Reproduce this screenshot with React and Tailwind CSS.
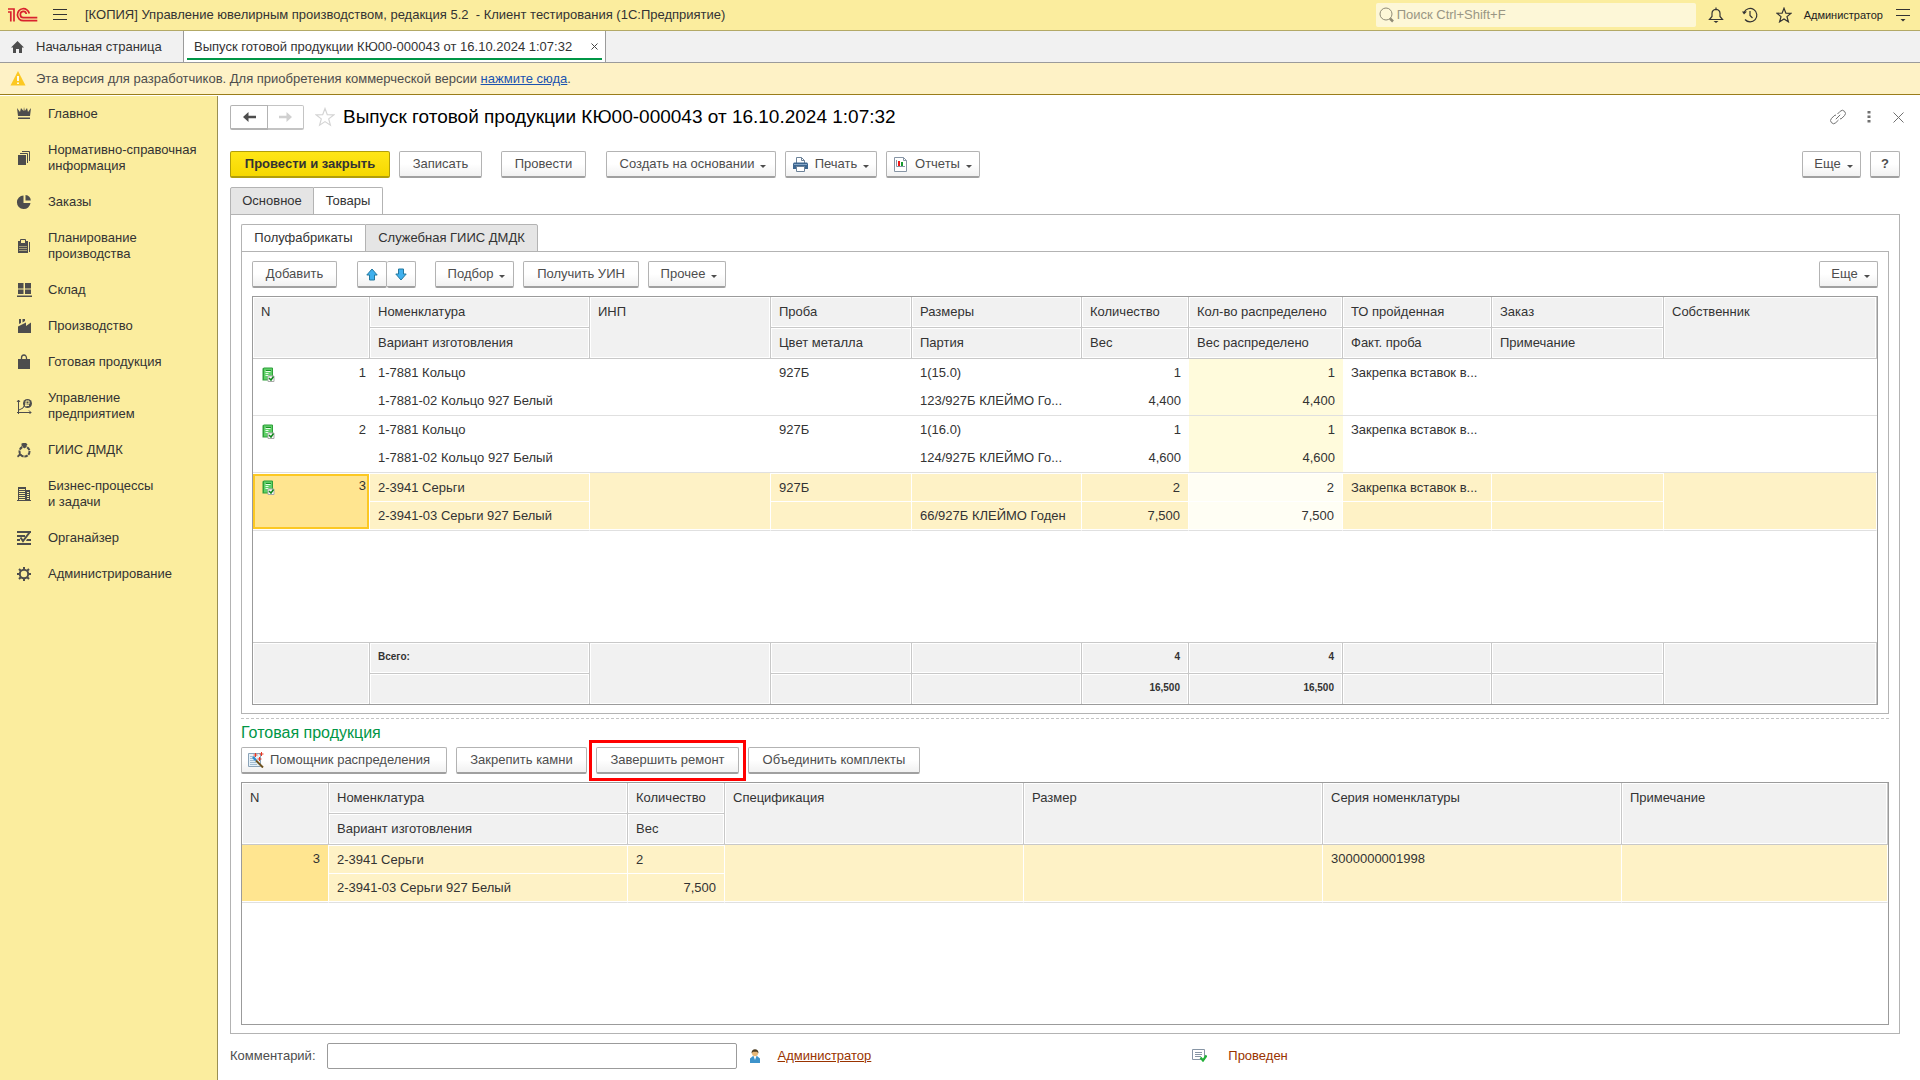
import { useState } from "react";

const btn =
  "flex h-[27px] items-center justify-center rounded-xs border border-[#b3b3b3] border-b-2 border-b-[#a0a0a0] bg-linear-to-b from-white from-50% to-[#f1f1f1] whitespace-nowrap text-[#4d4d4d]";

const headCell =
  "h-[31px] border-r border-b border-[#c8c8c8] bg-[#f1f1f1] px-2 text-left font-normal inset-shadow-[0_0_0_1px_#fff]";

function Caret() {
  return (
    <svg width="6" height="3" viewBox="0 0 6 3" className="mt-1 ml-[6px] shrink-0">
      <path d="M0 0h6L3 3z" fill="#4d4d4d" />
    </svg>
  );
}

function Logo() {
  return (
    <svg width="30" height="16" viewBox="0 0 30 16" fill="none" stroke="#d9232e" strokeWidth="1.7">
      <path d="M0 2h6v12.500M0 5h2.800v9.500" />
      <path d="M21.300 6.500a6 6 0 1 0-6 7.200h14" />
      <path d="M18.300 7a3 3.200 0 1 0-3 3.700h14" />
    </svg>
  );
}

function MenuIcon({ name }) {
  const icons = {
    crown: <path d="M1 2l3 4 1-4 2.500 3L8 1l.8 4L11 2l1 4 3-4-1 8H2zM2 11.500h12V13H2z" />,
    docs: (
      <>
        <path d="M2 5h8v10H2z" />
        <path d="M4 3.500h7.500V13M6 1.500h7.500V11" fill="none" stroke="#4d4d4d" />
      </>
    ),
    pie: (
      <>
        <path d="M7.500 1.500A6.800 6.800 0 1 0 14.500 9H7.500z" />
        <path d="M9.500 1a6 6 0 0 1 5.300 5.500H9.500z" />
      </>
    ),
    calc: (
      <>
        <path d="M2 3h10v12H2z" />
        <path d="M4.500 1.500h5v4h-5z" fill="#fbed9e" stroke="#4d4d4d" />
        <path d="M13.500 4v10" stroke="#4d4d4d" />
        <path d="M3.500 8.500h7M3.500 10.500h7M3.500 12.500h7" stroke="#fbed9e" strokeDasharray="1 1" />
      </>
    ),
    boxes: <path d="M2 1h5.500v5.500H2zM9 1h6v5.500H9zM2 7.500h5.500V12H2zM9 7.500h6V12H9zM1 13.500h15V15H1z" />,
    factory: <path d="M2 15V8.500l8-4v3.500l5-3.500V15zM3 1h2v4L3 6zM6.500 1H9v2L6.500 4.500z" />,
    bag: (
      <>
        <path d="M2 5h12v10H2z" />
        <path d="M5.500 7V4a2.500 3 0 0 1 5 0v3" fill="none" stroke="#4d4d4d" strokeWidth="1.300" />
      </>
    ),
    chart: (
      <>
        <path d="M2.500 16V2M1 14.500h14M1 4l1.500-2L4 4M13 12.500l2 2-2 2M3 12l4-2 1-2" fill="none" stroke="#4d4d4d" />
        <circle cx="11.500" cy="5.500" r="4.500" />
        <path d="M10 8.500V3h3v3h-4M9 7.500h4" fill="none" stroke="#fbed9e" />
      </>
    ),
    ring: (
      <>
        <circle cx="8.500" cy="9.500" r="5" fill="none" stroke="#4d4d4d" strokeWidth="2" strokeDasharray="3.500 .8" />
        <path d="M5.500 1.500 7 1h3l1.500 1.500-3 4-3-3zM1 14l3-3 1.500 1.500-3.500 3z" />
      </>
    ),
    building: (
      <>
        <path d="M2 1h8v3h4v11H2z" />
        <path d="M3 3.500h6M3 5.500h6M3 7.500h6M3 9.500h6M3 11.500h6M3 13.500h6M11 6.500h2M11 8.500h2M11 10.500h2M11 12.500h2" stroke="#fbed9e" />
        <path d="M1 14.500h14" stroke="#4d4d4d" />
      </>
    ),
    organizer: (
      <>
        <path d="M1 1h14v2H1zM1 5h8v2H1zM1 9h3v2H1zM11 9h4v2h-5zM1 13h14v2H1z" />
        <path d="M4.500 7.500 7 11l6.500-8.500" fill="none" stroke="#4d4d4d" strokeWidth="2" />
      </>
    ),
    gear: (
      <>
        <circle cx="8" cy="8" r="4.200" fill="none" stroke="#4d4d4d" strokeWidth="2" />
        <path
          d="M8 1v2.500M8 12.500V15M1 8h2.500M12.500 8H15M3 3l2 2M11 11l2 2M13 3l-2 2M5 11l-2 2"
          stroke="#4d4d4d"
          strokeWidth="2"
        />
      </>
    ),
  };
  return (
    <svg width="16" height="16" viewBox="0 0 16 16" fill="#4d4d4d" className="shrink-0">
      {icons[name]}
    </svg>
  );
}

function RowIcon() {
  return (
    <svg width="13" height="15" viewBox="0 0 13 15">
      <path d="M1 1h9.500v12H1z" fill="#5fd068" />
      <path d="M.5 1.500 2 .5h8.500v1H2v11h5v1H.5z" fill="#2fa03a" />
      <path d="M10 1h1v8h-1z" fill="#2fa03a" />
      <path d="M3.500 4.500h5M3.500 6.500h3M3.500 8.500h3" stroke="#e8ffe8" />
      <path d="M4 3.500h5" stroke="#1c8c27" />
      <path d="M6 9h6v5.500H6z" fill="#fff" stroke="#aaa" />
      <path d="m7 11 2 2 2.500-3.500" fill="none" stroke="#10861c" strokeWidth="1.500" />
    </svg>
  );
}

function PrinterIcon() {
  return (
    <svg width="15" height="15" viewBox="0 0 15 15" className="shrink-0">
      <path d="M3.500 6V.5h5l3 3V6" fill="#fff" stroke="#6c8299" />
      <path d="M8.500.5v3h3" fill="none" stroke="#6c8299" />
      <path d="M1 5.500h13l1 1V12H0V6.500z" fill="#3c6690" />
      <path d="M1 7.500h13" stroke="#86a7c7" />
      <path d="M3.500 9.500h8v5h-8z" fill="#fff" stroke="#6c8299" />
    </svg>
  );
}

function ReportIcon() {
  return (
    <svg width="13" height="15" viewBox="0 0 13 15" className="shrink-0">
      <path d="M.5.500h9l3 3v11H.5z" fill="#fff" stroke="#8795a5" />
      <path d="M9.500.500v3h3" fill="none" stroke="#8795a5" />
      <path d="M2.500 3v6.500H11" fill="none" stroke="#8795a5" />
      <path d="M4 4h2v5H4z" fill="#f01818" />
      <path d="M7 5h2v4H7z" fill="#159a30" />
    </svg>
  );
}

function WandIcon() {
  return (
    <svg width="17" height="16" viewBox="0 0 17 16" className="shrink-0">
      <path d="M.5 1.500h12v13H.5z" fill="#e6f1f8" stroke="#8ba3b8" />
      <path d="M2 4.500h5M2 6.500h4M2 8.500h4M2 10.500h6M2 12.500h7" stroke="#a3bdd2" />
      <path d="m5 5 3 3.500" stroke="#2f8bcb" strokeWidth="2.500" />
      <path d="m8 8.500 7 7" stroke="#6d5320" strokeWidth="2" />
      <path d="M7.500 1v4M5.500 3h4M13.500 0v4M11.500 2h4M11.500 5v4M9.500 7h4" stroke="#e63a26" />
    </svg>
  );
}

function ArrowIcon({ down }) {
  return (
    <svg width="12" height="13" viewBox="0 0 12 13" className={down ? "rotate-180" : ""}>
      <path d="M6 1 .8 7h2.700v5h5V7h2.700z" fill="#3fb0ee" stroke="#23789f" />
    </svg>
  );
}

function BackIcon() {
  return (
    <svg width="13" height="10" viewBox="0 0 13 10" fill="currentColor">
      <path d="M0 5 5.500 0v3.700H13v2.600H5.500V10z" />
    </svg>
  );
}

const sections = [
  { icon: "crown", lines: ["Главное"] },
  { icon: "docs", lines: ["Нормативно-справочная", "информация"] },
  { icon: "pie", lines: ["Заказы"] },
  { icon: "calc", lines: ["Планирование", "производства"] },
  { icon: "boxes", lines: ["Склад"] },
  { icon: "factory", lines: ["Производство"] },
  { icon: "bag", lines: ["Готовая продукция"] },
  { icon: "chart", lines: ["Управление", "предприятием"] },
  { icon: "ring", lines: ["ГИИС ДМДК"] },
  { icon: "building", lines: ["Бизнес-процессы", "и задачи"] },
  { icon: "organizer", lines: ["Органайзер"] },
  { icon: "gear", lines: ["Администрирование"] },
];

const goods = [
  { n: 1, name: "1-7881 Кольцо", variant: "1-7881-02 Кольцо 927 Белый", size: "1(15.0)", batch: "123/927Б КЛЕЙМО Го...", qty: 1, weight: "4,400" },
  { n: 2, name: "1-7881 Кольцо", variant: "1-7881-02 Кольцо 927 Белый", size: "1(16.0)", batch: "124/927Б КЛЕЙМО Го...", qty: 1, weight: "4,600" },
  { n: 3, name: "2-3941 Серьги", variant: "2-3941-03 Серьги 927 Белый", size: "", batch: "66/927Б КЛЕЙМО Годен", qty: 2, weight: "7,500" },
];

function TopBar() {
  return (
    <header className="flex h-[31px] items-center border-b border-[#b3a966] bg-[#fbed9e] pr-[10px] pl-2">
      <Logo />
      <button type="button" aria-label="Меню" className="ml-[15px]">
        <svg width="14" height="12" viewBox="0 0 14 12" stroke="#333">
          <path d="M0 .5h14M0 5.500h14M0 10.500h14" />
        </svg>
      </button>
      <h1 className="ml-[18px] flex-1 whitespace-pre">
        {"[КОПИЯ] Управление ювелирным производством, редакция 5.2  - Клиент тестирования (1С:Предприятие)"}
      </h1>
      <label className="flex h-6 w-[320px] items-center rounded-xs bg-[#fdf7d7] pl-[3px]">
        <svg width="15" height="16" viewBox="0 0 15 16" fill="none" stroke="#8f8b76">
          <circle cx="7" cy="7" r="6" />
          <path d="m11 11.500 3 3" strokeWidth="2.500" />
        </svg>
        <input
          type="text"
          aria-label="Поиск"
          placeholder="Поиск Ctrl+Shift+F"
          className="ml-[3px] min-w-0 flex-1 bg-transparent outline-none placeholder:text-[#999684]"
        />
      </label>
      <button type="button" aria-label="Уведомления" className="ml-3">
        <svg width="16" height="16" viewBox="0 0 16 16" fill="none" stroke="#333" strokeWidth="1.200">
          <path d="M1.500 12.500 4 9.500V6.500C4 4 5.500 2.500 8 2.300 10.500 2.500 12 4 12 6.500v3l2.500 3zM8 .5v2" />
          <path d="M5.500 14h5L8 16z" fill="#333" stroke="none" />
        </svg>
      </button>
      <button type="button" aria-label="История" className="ml-[18px]">
        <svg width="16" height="16" viewBox="0 0 16 16" fill="none" stroke="#333" strokeWidth="1.200">
          <path d="M2 5.500A6.700 6.700 0 1 1 3 12.500M8 4v4.500l2.500 2.500" />
          <path d="M0 4.500h5L2 7.500z" fill="#333" stroke="none" />
        </svg>
      </button>
      <button type="button" aria-label="Избранное" className="ml-[18px]">
        <svg width="16" height="16" viewBox="0 0 16 16" fill="none" stroke="#333" strokeWidth="1.200">
          <path d="m8 1.200 1.900 4.900 5.100.2-4 3.300 1.400 5.200L8 11.900l-4.400 2.900L5 9.600 1 6.300l5.100-.2z" />
        </svg>
      </button>
      <span className="ml-3 text-[11px] text-[#222]">Администратор</span>
      <button type="button" aria-label="Настройки" className="ml-[13px]">
        <svg width="14" height="13" viewBox="0 0 14 13" stroke="#333">
          <path d="M0 .5h14M0 6.500h14" />
          <path d="M4.500 10h5L7 12.500z" fill="#333" stroke="none" />
        </svg>
      </button>
    </header>
  );
}

function WindowTabs() {
  return (
    <nav className="flex h-8 border-b border-[#9b9b9b] bg-[#f1f1f1]">
      <button type="button" className="flex w-[184px] items-center border-r border-[#9b9b9b] pl-[11px]">
        <svg width="13" height="12" viewBox="0 0 13 12" fill="#4d4d4d">
          <path d="M6.500 0 13 6.500h-2V12H8V8H5v4H2V6.500H0z" />
        </svg>
        <span className="ml-3">Начальная страница</span>
      </button>
      <div className="flex w-[422px] border-r border-[#9b9b9b] bg-white px-[3px] pb-[2px]">
        <div className="flex flex-1 items-center justify-between border-b-2 border-[#009646] pt-1 pr-1 pl-[7px]">
          <span>Выпуск готовой продукции КЮ00-000043 от 16.10.2024 1:07:32</span>
          <button type="button" aria-label="Закрыть вкладку">
            <svg width="7" height="7" viewBox="0 0 7 7" stroke="#444">
              <path d="m.5.500 6 6M6.500.500l-6 6" />
            </svg>
          </button>
        </div>
      </div>
    </nav>
  );
}

function Sidebar() {
  return (
    <nav className="mt-px w-[218px] shrink-0 border-r border-[#9a8f52] bg-[#fbed9e]">
      {sections.map((s) => (
        <a key={s.icon} href="#" className="flex items-center py-[10px] pl-4 leading-4">
          <MenuIcon name={s.icon} />
          <span className="ml-4">
            {s.lines.map((line) => (
              <span key={line} className="block whitespace-nowrap">
                {line}
              </span>
            ))}
          </span>
        </a>
      ))}
    </nav>
  );
}

function Totals({ children, rowSpan, right }) {
  return (
    <td
      rowSpan={rowSpan}
      className={`h-[31px] border-t border-r border-[#c8c8c8] bg-[#f1f1f1] px-2 pb-[3px] text-[10px] font-bold inset-shadow-[0_0_0_1px_#fff] ${right ? "text-right" : ""}`}
    >
      {children}
    </td>
  );
}

function GoodsRow({ row, selected, onSelect }) {
  // the selected record is split by white lines, the others only have a bottom line
  const top = selected
    ? "h-[29px] border-r border-y border-white bg-[#fef2c6] px-2"
    : "h-7 px-2";
  const bottom = selected
    ? "h-[29px] border-r border-r-white border-b border-b-[#e0e0e0] bg-[#fef2c6] px-2 inset-shadow-[0_-1px_0_#fff]"
    : "h-[29px] border-b border-[#e0e0e0] px-2";
  const spread = selected ? "bg-[#fffef4]" : "bg-[#fffbdc]";

  return (
    <>
      <tr onClick={onSelect}>
        <td rowSpan={2} className="border-b border-[#e0e0e0] py-px pr-px align-top">
          <div
            className={`flex items-start justify-between ${
              selected
                ? "h-[55px] border-2 border-[#fcc822] bg-[#ffe590] pt-px pr-px pl-[7px]"
                : "h-[54px] pt-1 pr-[3px] pl-[9px]"
            }`}
          >
            <div className="pt-[3px]">
              <RowIcon />
            </div>
            <span>{row.n}</span>
          </div>
        </td>
        <td className={top}>{row.name}</td>
        <td rowSpan={2} className={bottom}></td>
        <td className={top}>927Б</td>
        <td className={top}>{row.size}</td>
        <td className={`${top} text-right`}>{row.qty}</td>
        <td className={`${top} ${spread} text-right`}>{row.qty}</td>
        <td className={`${top} whitespace-nowrap`}>Закрепка вставок в...</td>
        <td className={top}></td>
        <td rowSpan={2} className={bottom}></td>
      </tr>
      <tr onClick={onSelect}>
        <td className={bottom}>{row.variant}</td>
        <td className={bottom}></td>
        <td className={`${bottom} whitespace-nowrap`}>{row.batch}</td>
        <td className={`${bottom} text-right`}>{row.weight}</td>
        <td className={`${bottom} ${spread} text-right`}>{row.weight}</td>
        <td className={bottom}></td>
        <td className={bottom}></td>
      </tr>
    </>
  );
}

function GoodsTable() {
  const [current, setCurrent] = useState(3);

  return (
    <div className="mt-2 border border-[#9b9b9b]">
      <table className="w-full table-fixed border-separate border-spacing-0">
        <colgroup>
          <col className="w-[117px]" />
          <col className="w-[220px]" />
          <col className="w-[181px]" />
          <col className="w-[141px]" />
          <col className="w-[170px]" />
          <col className="w-[107px]" />
          <col className="w-[154px]" />
          <col className="w-[149px]" />
          <col className="w-[172px]" />
          <col />
        </colgroup>
        <thead>
          <tr>
            <th rowSpan={2} className={`${headCell} pt-[6px] align-top`}>N</th>
            <th className={headCell}>Номенклатура</th>
            <th rowSpan={2} className={`${headCell} pt-[6px] align-top`}>ИНП</th>
            <th className={headCell}>Проба</th>
            <th className={headCell}>Размеры</th>
            <th className={headCell}>Количество</th>
            <th className={headCell}>Кол-во распределено</th>
            <th className={headCell}>ТО пройденная</th>
            <th className={headCell}>Заказ</th>
            <th rowSpan={2} className={`${headCell} pt-[6px] align-top`}>Собственник</th>
          </tr>
          <tr>
            <th className={headCell}>Вариант изготовления</th>
            <th className={headCell}>Цвет металла</th>
            <th className={headCell}>Партия</th>
            <th className={headCell}>Вес</th>
            <th className={headCell}>Вес распределено</th>
            <th className={headCell}>Факт. проба</th>
            <th className={headCell}>Примечание</th>
          </tr>
        </thead>
        <tbody>
          {goods.map((row) => (
            <GoodsRow key={row.n} row={row} selected={row.n === current} onSelect={() => setCurrent(row.n)} />
          ))}
          <tr>
            <td colSpan={10} className="h-[111px]"></td>
          </tr>
        </tbody>
        <tfoot>
          <tr>
            <Totals rowSpan={2} />
            <Totals>Всего:</Totals>
            <Totals rowSpan={2} />
            <Totals />
            <Totals />
            <Totals right>4</Totals>
            <Totals right>4</Totals>
            <Totals />
            <Totals />
            <Totals rowSpan={2} />
          </tr>
          <tr>
            <Totals />
            <Totals />
            <Totals />
            <Totals right>16,500</Totals>
            <Totals right>16,500</Totals>
            <Totals />
            <Totals />
          </tr>
        </tfoot>
      </table>
    </div>
  );
}

function OutputTable() {
  const top = "h-[29px] border-r border-y border-white bg-[#fef2c6] px-2";
  const bottom =
    "h-[29px] border-r border-r-white border-b border-b-[#e0e0e0] bg-[#fef2c6] px-2 inset-shadow-[0_-1px_0_#fff]";
  const tall = `${bottom} pt-[5px] align-top`;

  return (
    <div className="mt-2 flex-1 border border-[#9b9b9b]">
      <table className="w-full table-fixed border-separate border-spacing-0">
        <colgroup>
          <col className="w-[87px]" />
          <col className="w-[299px]" />
          <col className="w-[97px]" />
          <col className="w-[299px]" />
          <col className="w-[299px]" />
          <col className="w-[299px]" />
          <col />
        </colgroup>
        <thead>
          <tr>
            <th rowSpan={2} className={`${headCell} pt-[6px] align-top`}>N</th>
            <th className={headCell}>Номенклатура</th>
            <th className={headCell}>Количество</th>
            <th rowSpan={2} className={`${headCell} pt-[6px] align-top`}>Спецификация</th>
            <th rowSpan={2} className={`${headCell} pt-[6px] align-top`}>Размер</th>
            <th rowSpan={2} className={`${headCell} pt-[6px] align-top`}>Серия номенклатуры</th>
            <th rowSpan={2} className={`${headCell} pt-[6px] align-top`}>Примечание</th>
          </tr>
          <tr>
            <th className={headCell}>Вариант изготовления</th>
            <th className={headCell}>Вес</th>
          </tr>
        </thead>
        <tbody>
          <tr>
            <td rowSpan={2} className={`${tall} bg-[#ffe590] text-right`}>3</td>
            <td className={top}>2-3941 Серьги</td>
            <td className={top}>2</td>
            <td rowSpan={2} className={tall}></td>
            <td rowSpan={2} className={tall}></td>
            <td rowSpan={2} className={tall}>3000000001998</td>
            <td rowSpan={2} className={tall}></td>
          </tr>
          <tr>
            <td className={bottom}>2-3941-03 Серьги 927 Белый</td>
            <td className={`${bottom} text-right`}>7,500</td>
          </tr>
        </tbody>
      </table>
    </div>
  );
}

export default function App() {
  return (
    <div className="flex min-h-screen flex-col bg-white font-['Liberation_Sans',Arial,sans-serif] text-[13px] leading-[18px] text-[#333]">
      <TopBar />
      <WindowTabs />
      <div className="flex h-8 items-center border-b border-[#9a7d1a] bg-[#fef2c6] pl-[10px] text-[#4d4d4d]">
        <svg width="16" height="15" viewBox="0 0 16 15">
          <path d="M8 0 15.500 14.500H.5z" fill="#fcc822" />
          <path d="M8 5v5M8 11.500v1.500" stroke="#fff" strokeWidth="1.800" />
        </svg>
        <p className="ml-[10px]">
          Эта версия для разработчиков. Для приобретения коммерческой версии{" "}
          <a href="#" className="text-[#1a53b0] underline">нажмите сюда</a>.
        </p>
      </div>

      <div className="flex flex-1">
        <Sidebar />
        <main className="flex min-w-0 flex-1 flex-col pt-[10px] pr-5 pl-3">
          <div className="flex h-6 items-center">
            <div className="flex">
              <button type="button" aria-label="Назад" className="flex h-[25px] w-[38px] items-center justify-center rounded-l-xs border border-b-2 border-[#b3b3b3] text-[#4d4d4d]">
                <BackIcon />
              </button>
              <button type="button" aria-label="Вперед" className="flex h-[25px] w-9 items-center justify-center rounded-r-xs border border-b-2 border-l-0 border-[#c4c4c4] text-[#d0d0d0]">
                <span className="rotate-180">
                  <BackIcon />
                </span>
              </button>
            </div>
            <button type="button" aria-label="В избранное" className="ml-[11px]">
              <svg width="20" height="20" viewBox="0 0 20 20" fill="none" stroke="#d4d4d4" strokeWidth="1.200">
                <path d="m10 1.500 2.300 6.100 6.400.3-5 4 1.700 6.300L10 14.600l-5.400 3.600 1.700-6.300-5-4 6.400-.3z" />
              </svg>
            </button>
            <h2 className="ml-2 flex-1 text-[19px] text-black">
              Выпуск готовой продукции КЮ00-000043 от 16.10.2024 1:07:32
            </h2>
            <button type="button" aria-label="Получить ссылку">
              <svg width="16" height="16" viewBox="0 0 16 16" fill="none" stroke="#707070">
                <path d="M7.500 5l2.700-2.700a3 3 0 0 1 4.300 0 3 3 0 0 1 0 4.300L12 9.100a2.500 2.500 0 0 1-2 .8M8.500 11l-2.700 2.700a3 3 0 0 1-4.300 0 3 3 0 0 1 0-4.300L4 6.900a2.500 2.500 0 0 1 2-.8M5.800 10.200l4.400-4.400" />
              </svg>
            </button>
            <button type="button" aria-label="Действия" className="ml-[21px]">
              <svg width="4" height="12" viewBox="0 0 4 12" fill="#707070">
                <path d="M.5 0h3v2.500h-3zM.5 4.500h3V7h-3zM.5 9h3v2.500h-3z" />
              </svg>
            </button>
            <button type="button" aria-label="Закрыть" className="ml-[22px] -mr-1">
              <svg width="11" height="11" viewBox="0 0 11 11" stroke="#707070">
                <path d="m.5.500 10 10M10.500.500l-10 10" />
              </svg>
            </button>
          </div>

          <div className="mt-[22px] flex">
            <button type="button" className="flex h-[27px] w-[160px] items-center justify-center rounded-xs border border-b-2 border-[#b19e0a] bg-linear-to-b from-[#ffe616] to-[#f6d800] font-bold text-[#333]">
              Провести и закрыть
            </button>
            <button type="button" className={`${btn} ml-[9px] w-[83px]`}>Записать</button>
            <button type="button" className={`${btn} ml-[19px] w-[85px]`}>Провести</button>
            <button type="button" className={`${btn} ml-5 w-[170px] pl-1`}>
              Создать на основании <Caret />
            </button>
            <button type="button" className={`${btn} ml-[9px] w-[92px]`}>
              <PrinterIcon />
              <span className="ml-[7px]">Печать</span>
              <Caret />
            </button>
            <button type="button" className={`${btn} ml-[9px] w-[94px]`}>
              <ReportIcon />
              <span className="ml-2">Отчеты</span>
              <Caret />
            </button>
            <button type="button" className={`${btn} ml-auto w-[59px] pl-1`}>
              Еще <Caret />
            </button>
            <button type="button" className={`${btn} ml-[9px] w-[30px] font-bold`}>?</button>
          </div>

          <div className="mt-[9px] -mb-px flex h-7">
            <button type="button" className="w-[84px] rounded-tl-xs border border-[#b3b3b3] bg-[#e5e5e5]">Основное</button>
            <button type="button" className="w-[69px] rounded-tr-xs border border-b-0 border-l-0 border-[#b3b3b3] bg-white pb-[2px]">Товары</button>
          </div>
          <section className="flex flex-1 flex-col border border-[#b3b3b3] px-[10px] pt-[9px] pb-2">
            <div className="-mb-px flex h-7">
              <button type="button" className="w-[124px] rounded-tl-xs border border-r-0 border-b-0 border-[#b3b3b3] bg-white pb-[2px]">Полуфабрикаты</button>
              <button type="button" className="w-[173px] rounded-tr-xs border border-[#b3b3b3] bg-[#e5e5e5]">Служебная ГИИС ДМДК</button>
            </div>
            <div className="border border-[#b3b3b3] px-[10px] pt-[9px] pb-2">
              <div className="flex">
                <button type="button" className={`${btn} w-[85px]`}>Добавить</button>
                <button type="button" aria-label="Переместить вверх" className={`${btn} ml-5 w-[30px]`}>
                  <ArrowIcon />
                </button>
                <button type="button" aria-label="Переместить вниз" className={`${btn} w-[29px] border-l-0`}>
                  <ArrowIcon down />
                </button>
                <button type="button" className={`${btn} ml-[19px] w-[79px] pl-1`}>
                  Подбор <Caret />
                </button>
                <button type="button" className={`${btn} ml-[9px] w-[116px]`}>Получить УИН</button>
                <button type="button" className={`${btn} ml-[9px] w-[78px] pl-1`}>
                  Прочее <Caret />
                </button>
                <button type="button" className={`${btn} ml-auto w-[59px] pl-1`}>
                  Еще <Caret />
                </button>
              </div>
              <GoodsTable />
            </div>

            <div className="mt-1 border-t border-dashed border-[#c4c4c4]"></div>
            <h3 className="mt-1 text-base leading-5 text-[#009646]">Готовая продукция</h3>
            <div className="mt-1 flex">
              <button type="button" className={`${btn} w-[206px] pr-[10px]`}>
                <WandIcon />
                <span className="ml-[5px]">Помощник распределения</span>
              </button>
              <button type="button" className={`${btn} ml-[9px] w-[131px]`}>Закрепить камни</button>
              <div className="relative ml-[9px]">
                <button type="button" className={`${btn} w-[143px]`}>Завершить ремонт</button>
                <div className="pointer-events-none absolute -inset-[7px] border-3 border-[#ff0000]"></div>
              </div>
              <button type="button" className={`${btn} ml-[9px] w-[172px]`}>Объединить комплекты</button>
            </div>
            <OutputTable />
          </section>

          <footer className="flex h-[46px] items-center pb-[3px] text-[#4d4d4d]">
            <label htmlFor="comment">Комментарий:</label>
            <input id="comment" type="text" className="ml-[11px] h-[26px] w-[410px] rounded-xs border border-[#9b9b9b] px-2 outline-none" />
            <svg width="12" height="14" viewBox="0 0 12 14" className="ml-3">
              <path d="M1 14V9.500L4 7h4l3 2.500V14z" fill="#3d93cb" />
              <path d="M4.500 7h3L6 11z" fill="#fff" />
              <circle cx="6" cy="4.200" r="3" fill="#e8b878" />
              <path d="M2.500 4.500C2.500 1.500 4 .3 6 .3s3.500 1.200 3.500 4.200L8 2.800H4z" fill="#4a3a20" />
            </svg>
            <a href="#" className="ml-[17px] text-[#993300] underline">Администратор</a>
            <svg width="15" height="13" viewBox="0 0 15 13" className="ml-[321px]">
              <path d="M.5.500h12v10H.5z" fill="#fff" stroke="#8795a5" />
              <path d="M3 3.500h7M3 5.500h7M3 7.500h6" stroke="#8795a5" />
              <path d="m8.500 8.500 2.500 3 3.500-5" fill="none" stroke="#22b038" strokeWidth="2.200" />
            </svg>
            <span className="ml-[21px] text-[#993300]">Проведен</span>
          </footer>
        </main>
      </div>
    </div>
  );
}
